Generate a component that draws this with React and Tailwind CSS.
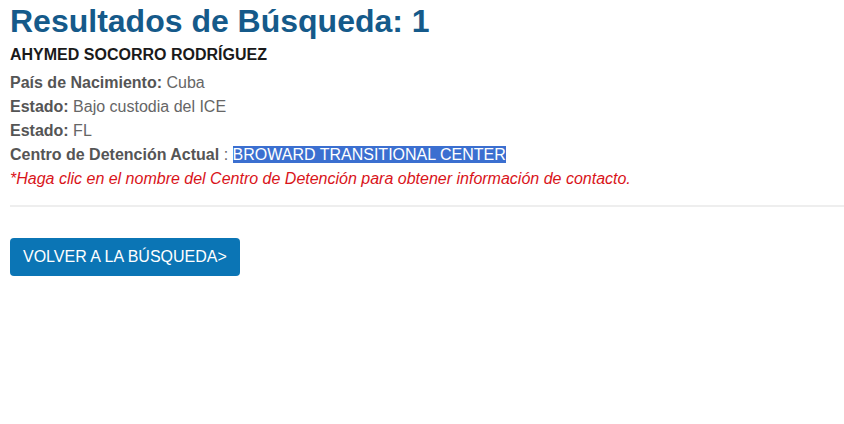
export default function App() {
  return (
    <div className="bg-white w-[844px] h-[424px] px-[10px] pt-[2px] font-['Liberation_Sans',Arial,sans-serif]">
      <h1 className="text-[32px] leading-[38px] font-bold text-[#155a8a]">Resultados de Búsqueda: 1</h1>
      <div className="mt-[5px] text-[16px] leading-[20px] font-bold text-[#1a1a1a]">AHYMED SOCORRO RODRÍGUEZ</div>
      <div className="mt-[6px] text-[16px] leading-[24px] text-[#666]">
        <div><span className="font-bold text-[#555]">País de Nacimiento:</span> Cuba</div>
        <div><span className="font-bold text-[#555]">Estado:</span> Bajo custodia del ICE</div>
        <div><span className="font-bold text-[#555]">Estado:</span> FL</div>
        <div><span className="font-bold text-[#555]">Centro de Detención Actual</span> : <span className="bg-[#3b6fd0] text-white">BROWARD TRANSITIONAL CENTER</span></div>
        <div className="italic text-[#d9141a]">*Haga clic en el nombre del Centro de Detención para obtener información de contacto.</div>
      </div>
      <div className="mt-[14px] -mr-[10px] border-t-2 border-[#eeeeee]"></div>
      <button className="mt-[31px] bg-[#0b75b5] text-white text-[16px] rounded-[4px] px-[13px] h-[38px]">VOLVER A LA BÚSQUEDA&gt;</button>
    </div>
  );
}
